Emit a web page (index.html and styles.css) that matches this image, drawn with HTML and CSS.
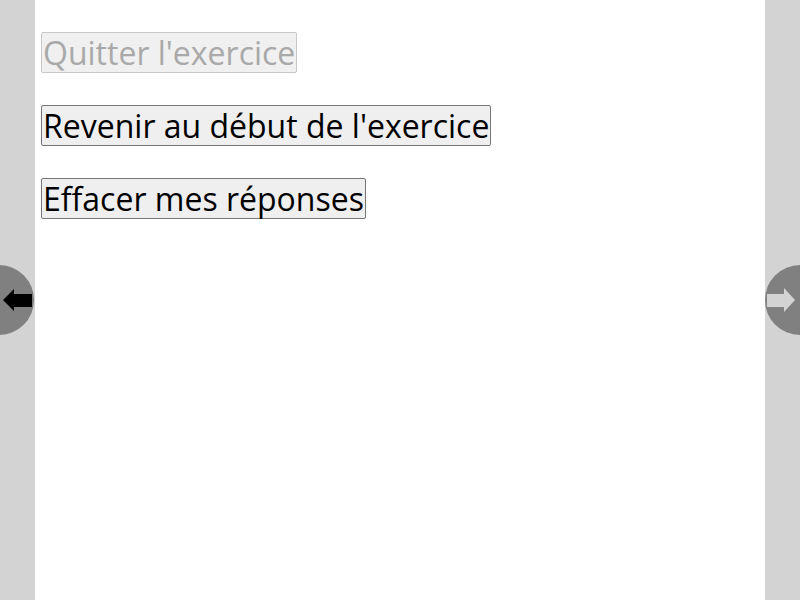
FILE: index.html
```html
<!DOCTYPE html>
<html lang="fr">
<head>
<meta charset="utf-8">
<link rel="stylesheet" href="styles.css">
</head>
<body>
<div class="page">
  <aside class="side side-left">
    <button class="nav nav-prev" aria-label="Précédent">
      <svg width="29" height="24" viewBox="0 0 29 24"><polygon points="0,12 11,1 11,6 29,6 29,19 11,19 11,23" fill="#000"/></svg>
    </button>
  </aside>
  <main class="content">
    <button class="btn" disabled>Quitter l'exercice</button>
    <button class="btn">Revenir au début de l'exercice</button>
    <button class="btn">Effacer mes réponses</button>
  </main>
  <aside class="side side-right">
    <button class="nav nav-next" aria-label="Suivant" disabled>
      <svg width="28" height="24" viewBox="0 0 28 24"><polygon points="28,12 17,0 17,6 0,6 0,19 17,19 17,24" fill="#d3d3d3"/></svg>
    </button>
  </aside>
</div>
</body>
</html>
```
FILE: styles.css
```css
html, body {
  margin: 0;
  padding: 0;
  height: 100%;
}
body {
  font-family: "Open Sans", "Noto Sans", sans-serif;
  overflow: hidden;
}
.page {
  display: flex;
  height: 600px;
}
.side {
  width: 35px;
  flex: none;
  background: #d3d3d3;
  position: relative;
}
.content {
  flex: 1;
  background: #fff;
  display: flex;
  flex-direction: column;
  align-items: flex-start;
  gap: 32px;
  padding: 32px 0 0 6px;
}
.btn {
  font-family: "Open Sans", "Noto Sans", sans-serif;
  font-size: 32px;
  line-height: 37px;
  padding: 1px 1px;
  margin: 0;
  color: #000;
  background: #efefef;
  border: 1px solid #767676;
  border-radius: 2px;
}
.btn:disabled {
  color: #a9a9a9;
  border-color: #c8c8c8;
  background: #f0f0f0;
}
.nav {
  position: absolute;
  top: 265px;
  width: 70px;
  height: 70px;
  border-radius: 50%;
  background: #808080;
  border: none;
  padding: 0;
  display: flex;
  align-items: center;
}
.nav-prev {
  right: 1px;
  justify-content: flex-end;
  padding-right: 2px;
}
.nav-next {
  left: 0;
  justify-content: flex-start;
  padding-left: 2px;
}
.nav svg {
  display: block;
}
```
